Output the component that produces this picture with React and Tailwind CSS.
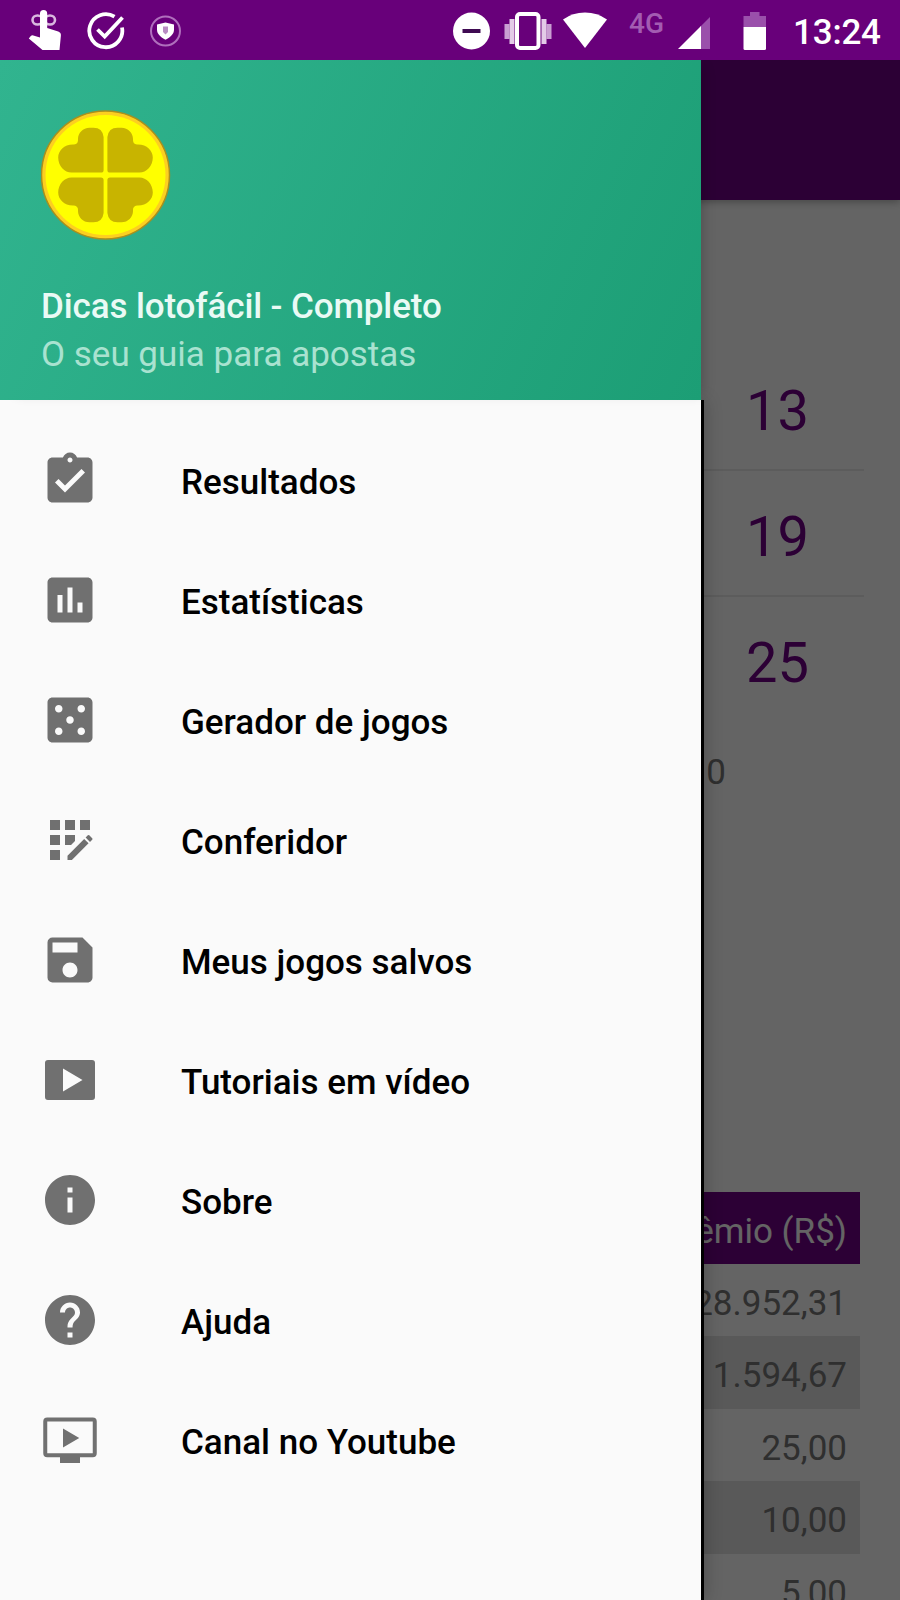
import {
  MdAppRegistration,
  MdAssessment,
  MdAssignmentTurnedIn,
  MdCasino,
  MdHelp,
  MdInfo,
  MdSave,
} from 'react-icons/md';

function VideoIcon({ className }) {
  return (
    <svg className={className} viewBox="0 0 24 24" fill="currentColor">
      <path fillRule="evenodd" d="M3.2 4h17.6A1.2 1.2 0 0122 5.2v13.6a1.2 1.2 0 01-1.2 1.2H3.2A1.2 1.2 0 012 18.8V5.2A1.2 1.2 0 013.2 4zM9.2 7.4v9.2L17 12z" />
    </svg>
  );
}

function TvIcon({ className }) {
  return (
    <svg className={className} viewBox="0 0 24 24" fill="currentColor">
      <rect x="2.1" y="3.8" width="19.8" height="14.3" rx="0.8" fill="none" stroke="currentColor" strokeWidth="1.6" />
      <path d="M8 18.5h8v2.7H8zM9.2 7.4v7.6L15.7 11.2z" />
    </svg>
  );
}

const menu = [
  { label: 'Resultados', icon: MdAssignmentTurnedIn },
  { label: 'Estatísticas', icon: MdAssessment },
  { label: 'Gerador de jogos', icon: MdCasino },
  { label: 'Conferidor', icon: MdAppRegistration },
  { label: 'Meus jogos salvos', icon: MdSave },
  { label: 'Tutoriais em vídeo', icon: VideoIcon },
  { label: 'Sobre', icon: MdInfo },
  { label: 'Ajuda', icon: MdHelp },
  { label: 'Canal no Youtube', icon: TvIcon },
];

const numbers = ['13', '19', '25'];
const prizes = ['28.952,31', '1.594,67', '25,00', '10,00', '5,00'];

function StatusBar() {
  return (
    <header className="flex h-[60px] items-start bg-[#68007a] pl-7 text-white">
      {/* finger with a reminder ribbon */}
      <svg className="mt-[9px] h-[42px] w-[34px]" viewBox="0 0 34 42" fill="none">
        <ellipse cx="9.5" cy="11" rx="5" ry="4.5" stroke="#d9b8df" strokeWidth="2.6" />
        <ellipse cx="22" cy="11" rx="5" ry="4.5" stroke="#d9b8df" strokeWidth="2.6" />
        <path fill="#fff" d="M12 4.5a3.6 3.6 0 017.2 0V19l11 3.5q3 1.2 2.7 4L31.5 41H14.5L.8 29.5l2-2.5q1-1 2.5-.6l6.700 2z" />
      </svg>
      <svg className="ml-[25px] mt-3 h-[38px] w-[38px]" viewBox="0 0 38 38" fill="none" stroke="#fff" strokeWidth="3.8">
        <path d="M27.5 4.7A16.5 16.5 0 1035 15.5" />
        <path d="M10.5 17.5l7.2 7L35.5 5.5" />
      </svg>
      <svg className="ml-[25px] mt-[15px] h-8 w-8" viewBox="0 0 32 32" fill="none">
        <circle cx="15.5" cy="16" r="14.5" stroke="#b06fbd" strokeWidth="2" />
        <path fill="#fff" d="M15.5 7.5l8.5 2v5c0 4.5-3.5 7.7-8.5 10.2-5-2.5-8.5-5.7-8.5-10.2v-5z" />
        <path fill="#b98cc3" d="M13 11.5h5v5.5L15.5 19.5l-2.5-2.5z" />
      </svg>
      <svg className="ml-[271px] mt-3 h-[38px] w-[38px]" viewBox="0 0 38 38">
        <circle cx="18.5" cy="19" r="18.5" fill="#fff" />
        <path fill="#3f0a52" d="M9.5 17h18v4h-18z" />
      </svg>
      <svg className="ml-[13px] mt-3 h-[38px] w-[48px]" viewBox="0 0 48 38" fill="none">
        <path stroke="#c99fd2" strokeWidth="5" d="M3 12v15M45 12v15" />
        <path stroke="#e3cbe7" strokeWidth="5" d="M8 7v25M40 7v25" />
        <rect x="13" y="2" width="21.5" height="34" rx="3" stroke="#fff" strokeWidth="4" />
      </svg>
      <svg className="ml-[11px] mt-3 h-[37px] w-[44px]" viewBox="0 0 44 37" fill="#fff">
        <path d="M0 7.5Q9.5.5 22 .5t22 7L22 36z" />
      </svg>
      <span className="ml-[22px] mt-[8px] w-[49px] text-[28px] font-medium leading-[32px] text-[#a35cb2]">4G</span>
      <svg className="mt-[17px] h-8 w-8" viewBox="0 0 32 32">
        <path fill="#9a50ab" d="M32 0v32H22V10z" />
        <path fill="#fff" d="M23 9v23H0z" />
      </svg>
      <svg className="ml-[33px] mt-[11px] h-10 w-6" viewBox="0 0 24 40">
        <path fill="#9a50ab" d="M7 1h9.5v4H23v11H.5V5H7z" />
        <path fill="#fff" d="M.5 16H23v21.5q0 1.5-1.5 1.5H2q-1.5 0-1.5-1.5z" />
      </svg>
      <span className="ml-[26px] mt-[13px] text-[35px] font-medium leading-[40px] tracking-[-0.2px]">13:24</span>
    </header>
  );
}

function Clover() {
  return (
    <svg className="h-[130px] w-[130px]" viewBox="-64.5 -65 130 130">
      <defs>
        <path id="leaf" d="M-1.9-5V-38Q-3-47.3-12-47.3h-4C-22.5-47.3-27.5-42-27.5-36Q-27-31-31.5-30.5C-41-31-47.3-24.5-47.3-17.5-47.3-9-41-2.4-34-2.4H-4.5Q-1.9-2.4-1.9-5z" />
      </defs>
      <circle r="64" fill="#fdcf20" stroke="#a98f1d" strokeWidth="1.5" />
      <circle r="60" fill="#ffff00" />
      <g fill="#c8b400">
        <use href="#leaf" />
        <use href="#leaf" transform="scale(-1 1)" />
        <use href="#leaf" transform="scale(1 -1)" />
        <use href="#leaf" transform="scale(-1 -1)" />
      </g>
    </svg>
  );
}

function Drawer() {
  return (
    <aside className="absolute inset-y-0 left-0 flex w-[704px] flex-col">
      <div className="relative z-10 flex h-[340px] w-[701px] flex-col bg-linear-[115deg] from-[#31b48f] to-[#1c9e75] pl-[41px] pt-[50px] shadow-[9px_0_12px_-7px_rgba(0,0,0,0.2)]">
        <Clover />
        <p className="mt-[43px] text-[35px] font-medium leading-[48px] tracking-[-0.12px] text-[#eafaf5]">Dicas lotofácil - Completo</p>
        <p className="text-[35px] leading-[48px] text-[#a9e2d0]">O seu guia para apostas</p>
      </div>
      <nav className="flex-1 border-r-3 border-black bg-[#fafafa] pt-5 shadow-[2px_0_16px_rgba(0,0,0,0.2)]">
        {menu.map(({ label, icon: Icon }) => (
          <a key={label} className="flex h-[120px] items-center pl-[40.4px]">
            <Icon className="h-[60px] w-[60px] text-[#707070]" />
            <span className="ml-[80.6px] pt-[5px] text-[35px] font-medium leading-[42px] text-black">{label}</span>
          </a>
        ))}
      </nav>
    </aside>
  );
}

export default function App() {
  return (
    <div className="flex h-[1600px] w-[900px] flex-col overflow-hidden font-[Roboto,sans-serif]">
      <StatusBar />
      <div className="relative flex-1 overflow-hidden bg-[#fafafa]">
        <div className="h-[140px] bg-[#6e0085] shadow-[0_2px_8px_rgba(0,0,0,0.3)]" />
        <main className="flex flex-col px-9">
          <div className="mt-[145.5px]">
            {numbers.map((n, i) => (
              <div
                key={n}
                className={`flex h-[125.5px] items-center justify-end pr-[55px] pt-[8px] text-[56px] text-[#6e0085] ${i < 2 ? 'border-b-2 border-[#e6e6e6]' : ''}`}
              >
                {n}
              </div>
            ))}
          </div>
          <div className="flex h-[102px] items-center justify-end pr-[138px] text-[35px] text-[#757575]">0</div>
          <div className="mr-1 mt-[368px] text-right text-[35px] text-[#757575]">
            <div className="h-[72px] bg-[#6e0085] pr-[13px] pt-[2px] leading-[75px] text-[#fafafa]">Prêmio (R$)</div>
            {prizes.map((p, i) => (
              <div key={p} className={`h-[72.4px] pr-[13px] leading-[79px] ${i % 2 ? 'bg-[#dedede]' : ''}`}>{p}</div>
            ))}
          </div>
        </main>
        <div className="absolute inset-0 bg-black/60" />
        <Drawer />
      </div>
    </div>
  );
}
